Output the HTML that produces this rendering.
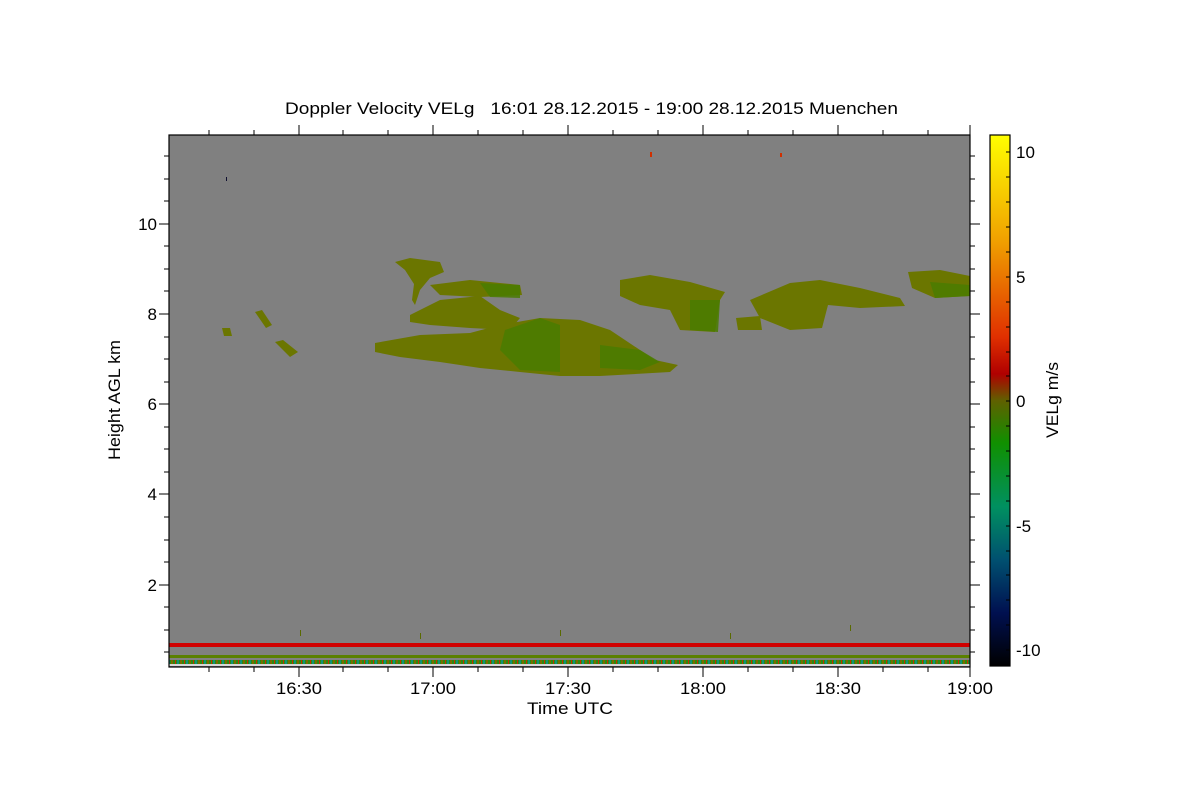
<!DOCTYPE html>
<html><head><style>
body{margin:0;background:#fff;}
svg text{font-family:"Liberation Sans",sans-serif;fill:#000;}
</style></head><body>
<svg width="1200" height="800" xmlns="http://www.w3.org/2000/svg">
<defs>
<linearGradient id="cb" x1="0" y1="0" x2="0" y2="1">
<stop offset="0" stop-color="#ffff00"/>
<stop offset="0.2" stop-color="#f0a000"/>
<stop offset="0.38" stop-color="#e03000"/>
<stop offset="0.45" stop-color="#b00000"/>
<stop offset="0.5" stop-color="#606000"/>
<stop offset="0.58" stop-color="#109000"/>
<stop offset="0.7" stop-color="#009060"/>
<stop offset="0.8" stop-color="#005070"/>
<stop offset="0.9" stop-color="#001050"/>
<stop offset="1" stop-color="#000000"/>
</linearGradient>
<pattern id="st" width="9" height="4" patternUnits="userSpaceOnUse">
<rect width="9" height="4" fill="#2a8a10"/><rect x="0" width="2" height="4" fill="#7a6a00"/><rect x="4" width="1" height="4" fill="#c03000"/><rect x="6" width="2" height="4" fill="#10907a"/>
</pattern>
</defs>
<text x="285" y="114" font-size="17" textLength="613" lengthAdjust="spacingAndGlyphs" xml:space="preserve">Doppler Velocity VELg   16:01 28.12.2015 - 19:00 28.12.2015 Muenchen</text>
<rect x="169" y="135" width="801" height="532" fill="#808080"/>
<g fill="#6b7600">
<path d="M375 343 L420 335 L470 333 L500 325 L540 318 L580 320 L610 330 L640 350 L655 360 L678 365 L670 372 L600 376 L560 376 L520 372 L480 368 L440 362 L400 357 L375 352Z"/>
<path d="M410 315 L440 300 L480 296 L500 310 L520 318 L510 330 L470 328 L430 325 L410 322Z"/>
<path d="M395 262 L410 258 L440 262 L444 272 L430 278 L420 290 L415 305 L412 300 L414 284 L405 270Z"/>
<path d="M430 285 L470 280 L500 283 L520 285 L522 295 L480 297 L440 295Z"/>
<path d="M620 280 L650 275 L690 282 L725 292 L720 300 L715 332 L680 330 L670 310 L640 305 L620 296Z"/>
<path d="M750 300 L790 283 L820 280 L860 288 L900 298 L905 306 L860 308 L828 305 L822 328 L790 330 L760 318Z"/>
<path d="M736 318 L760 316 L762 330 L738 330Z"/>
<path d="M908 272 L940 270 L970 276 L970 296 L935 298 L912 288Z"/>
<path d="M255 312 L262 310 L272 325 L266 328Z"/>
<path d="M275 342 L283 340 L298 352 L290 357Z"/>
<path d="M222 328 L230 328 L232 336 L224 336Z"/>
</g>
<g fill="#4a7c00" opacity="0.85">
<path d="M505 330 L540 318 L560 325 L560 372 L520 370 L500 350Z"/>
<path d="M600 345 L640 350 L660 362 L640 370 L600 368Z"/>
<path d="M480 283 L520 285 L520 298 L490 297Z"/>
<path d="M690 300 L720 300 L718 332 L690 330Z"/>
<path d="M930 282 L970 285 L970 296 L935 298Z"/>
</g>
<rect x="169" y="643" width="801" height="4" fill="#d00000"/>
<rect x="169" y="655" width="801" height="3" fill="#5a8000"/>
<rect x="169" y="660" width="801" height="4" fill="url(#st)"/>
<rect x="169" y="664" width="801" height="2" fill="#d8d8d8"/>
<g fill="#5a6a00">
<rect x="300" y="630" width="1" height="6"/><rect x="420" y="633" width="1" height="6"/><rect x="560" y="630" width="1" height="6"/><rect x="730" y="633" width="1" height="6"/><rect x="850" y="625" width="1" height="6"/>
<rect x="650" y="152" width="2" height="5" fill="#d03000"/><rect x="226" y="177" width="1" height="4" fill="#101030"/><rect x="780" y="153" width="2" height="4" fill="#d03000"/>
</g>
<rect x="169" y="135" width="801" height="532" fill="none" stroke="#000" stroke-width="1.2"/>
<g stroke="#000" stroke-width="1">
<path d="M209 667v5M254 667v5M343 667v5M388 667v5M478 667v5M523 667v5M613 667v5M658 667v5M748 667v5M793 667v5M883 667v5M928 667v5M299 667v10M433 667v10M568 667v10M703 667v10M838 667v10M970 667v10"/>
<path d="M209 135v-5M254 135v-5M343 135v-5M388 135v-5M478 135v-5M523 135v-5M613 135v-5M658 135v-5M748 135v-5M793 135v-5M883 135v-5M928 135v-5M299 135v-10M433 135v-10M568 135v-10M703 135v-10M838 135v-10M970 135v-10"/>
<path d="M169 652h-5M169 630h-5M169 607h-5M169 562h-5M169 540h-5M169 517h-5M169 472h-5M169 449h-5M169 427h-5M169 382h-5M169 359h-5M169 337h-5M169 291h-5M169 269h-5M169 246h-5M169 201h-5M169 179h-5M169 156h-5M169 585h-10M169 494h-10M169 404h-10M169 314h-10M169 224h-10"/>
<path d="M970 652h5M970 630h5M970 607h5M970 562h5M970 540h5M970 517h5M970 472h5M970 449h5M970 427h5M970 382h5M970 359h5M970 337h5M970 291h5M970 269h5M970 246h5M970 201h5M970 179h5M970 156h5M970 585h10M970 494h10M970 404h10M970 314h10M970 224h10"/>
</g>
<g font-size="17">
<text x="276" y="694" textLength="46" lengthAdjust="spacingAndGlyphs">16:30</text>
<text x="410" y="694" textLength="46" lengthAdjust="spacingAndGlyphs">17:00</text>
<text x="545" y="694" textLength="46" lengthAdjust="spacingAndGlyphs">17:30</text>
<text x="680" y="694" textLength="46" lengthAdjust="spacingAndGlyphs">18:00</text>
<text x="815" y="694" textLength="46" lengthAdjust="spacingAndGlyphs">18:30</text>
<text x="947" y="694" textLength="46" lengthAdjust="spacingAndGlyphs">19:00</text>
<text x="527" y="714" textLength="86" lengthAdjust="spacingAndGlyphs">Time UTC</text>
</g>
<g font-size="17" text-anchor="end">
<text x="157" y="591">2</text><text x="157" y="500">4</text><text x="157" y="410">6</text><text x="157" y="320">8</text><text x="157" y="230">10</text>
</g>
<text transform="translate(120,460) rotate(-90)" font-size="17" textLength="120" lengthAdjust="spacingAndGlyphs">Height AGL km</text>
<rect x="990" y="135" width="20" height="531" fill="url(#cb)" stroke="#000" stroke-width="1.2"/>
<g stroke="#000"><path d="M1010 152h-4M1010 177h-4M1010 202h-4M1010 227h-4M1010 252h-4M1010 277h-4M1010 302h-4M1010 327h-4M1010 352h-4M1010 376h-4M1010 401h-4M1010 426h-4M1010 451h-4M1010 476h-4M1010 501h-4M1010 526h-4M1010 551h-4M1010 575h-4M1010 600h-4M1010 625h-4M1010 650h-4"/></g>
<g font-size="17">
<text x="1016" y="158">10</text><text x="1016" y="283">5</text><text x="1016" y="407">0</text><text x="1016" y="532">-5</text><text x="1016" y="656">-10</text>
</g>
<text transform="translate(1058,438) rotate(-90)" font-size="17" textLength="76" lengthAdjust="spacingAndGlyphs">VELg m/s</text>
</svg>
</body></html>
